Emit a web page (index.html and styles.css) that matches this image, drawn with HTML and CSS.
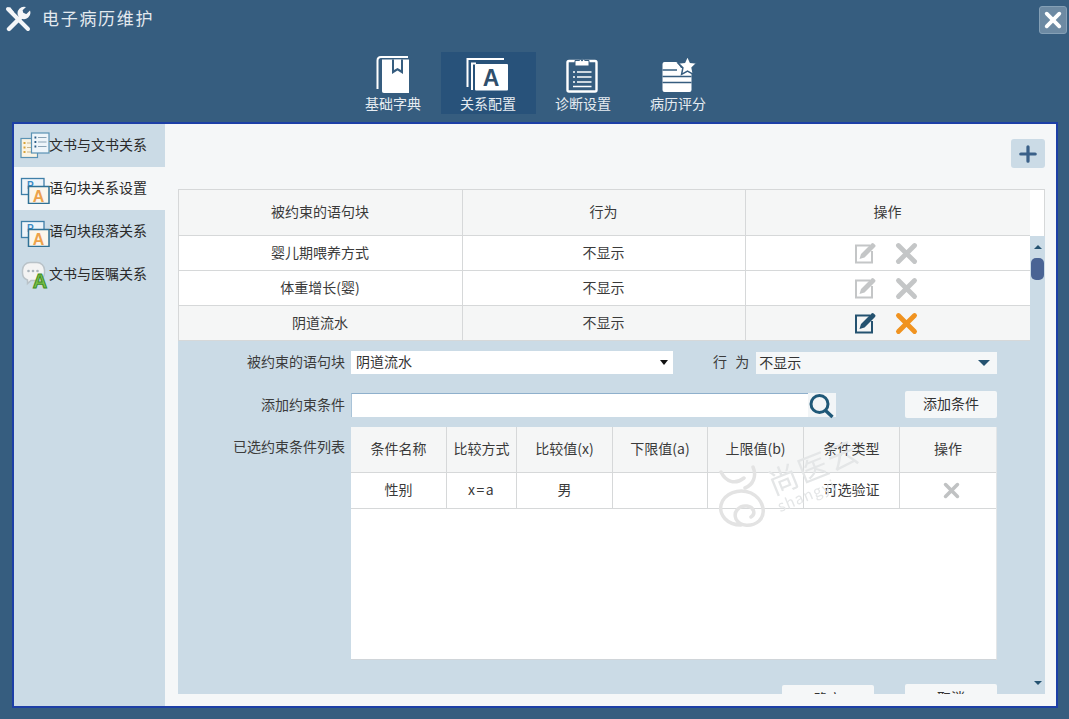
FILE: index.html
```html
<!DOCTYPE html>
<html lang="zh">
<head>
<meta charset="utf-8">
<title>电子病历维护</title>
<link rel="stylesheet" href="styles.css">
</head>
<body>
<svg class="defs" width="0" height="0" aria-hidden="true">
  <symbol id="i-edit" viewBox="0 0 23 22">
    <path d="M16 3.500H2v17h16V9" fill="none" stroke="currentColor" stroke-width="2"/>
    <path d="M5.500 17l1.500-5L17.500 1.500a1.500 1.500 0 0 1 2.200 0l1.300 1.300a1.500 1.500 0 0 1 0 2.200L10.500 15.500z" fill="currentColor"/>
  </symbol>
  <symbol id="i-x" viewBox="0 0 20 20">
    <path d="M3 3l14 14M17 3L3 17" fill="none" stroke="currentColor" stroke-width="4.200" stroke-linecap="round"/>
  </symbol>
</svg>

<header class="top">
  <div class="titlebar">
    <svg class="tool-icon" viewBox="0 0 26 26">
      <path d="M3 3l20 20" stroke="#f4f6f8" stroke-width="4" stroke-linecap="round"/>
      <path d="M2 3.500l3-2.500 4 5-2.500 2.500z" fill="#f4f6f8"/>
      <path d="M4 23L18 9" stroke="#f4f6f8" stroke-width="4.400" stroke-linecap="round"/>
      <path d="M25 4.500l-3.600 3.500-3-.800-.800-3L21 1a6.500 6.500 0 0 0-8 8.500l3 3a6.500 6.500 0 0 0 9-8z" fill="#f4f6f8"/>
    </svg>
    <h1 class="title">电子病历维护</h1>
    <button class="close" aria-label="关闭">
      <svg viewBox="0 0 20 20" class="close-x"><use href="#i-x"/></svg>
    </button>
  </div>
  <nav class="tabs">
    <a class="tab">
      <svg class="tab-icon" viewBox="0 0 38 38">
        <path d="M3.500 33V4.500C3.500 2 5 1 7 1h27" fill="none" stroke="#fff" stroke-width="2"/>
        <path d="M8 3.500h27V37H10c-1.500 0-2-1-2-2z" fill="#fff"/>
        <path d="M18 3.500h11v14.500l-5.500-3.500-5.500 3.500z" fill="#365d7f"/>
        <path d="M20 3.500h7v10.500l-3.500-2-3.500 2z" fill="#fff"/>
      </svg>
      <span>基础字典</span>
    </a>
    <a class="tab tab-on">
      <svg class="tab-icon" viewBox="0 0 44 38">
        <path d="M1.500 31V3H38" fill="none" stroke="#fff" stroke-width="2"/>
        <path d="M6 34V7.500h4" fill="none" stroke="#fff" stroke-width="2"/>
        <rect x="9" y="8" width="33" height="26.500" rx="1" fill="#fff"/>
        <text x="25" y="29.500" class="ico-tab-a">A</text>
      </svg>
      <span>关系配置</span>
    </a>
    <a class="tab">
      <svg class="tab-icon" viewBox="0 0 38 38">
        <rect x="3.500" y="5" width="29" height="30.500" rx="1.500" fill="none" stroke="#fff" stroke-width="2.400"/>
        <path d="M11 10V4.500h4.500a2.800 2.800 0 0 1 5.200 0H25V10z" fill="#fff" stroke="#365d7f" stroke-width="1"/>
        <circle cx="18" cy="4.200" r="1.100" fill="#365d7f"/>
        <path d="M9 16h2M13 16h14.500M9 21h2M13 21h14.500M9 26h2M13 26h14.500M9 30.500h18.500" stroke="#fff" stroke-width="1.300"/>
      </svg>
      <span>诊断设置</span>
    </a>
    <a class="tab">
      <svg class="tab-icon" viewBox="0 0 38 38">
        <path d="M5.500 6H18l4 6h10.500v22a2 2 0 0 1-2 2h-25a2 2 0 0 1-2-2V8a2 2 0 0 1 2-2z" fill="#fff"/>
        <path d="M3.500 14H18M3.500 20.500h29M3.500 26.500h29" stroke="#365d7f" stroke-width="1.500"/>
        <path d="M28.500 0l2.900 6.300 6.600.800-4.900 4.600 1.300 6.700-5.900-3.400-5.900 3.400 1.300-6.700-4.900-4.600 6.600-.800z" fill="#fff" stroke="#365d7f" stroke-width="1.500"/>
      </svg>
      <span>病历评分</span>
    </a>
  </nav>
</header>

<section class="panel">
  <aside class="side">
    <a class="side-item">
      <svg class="side-icon" viewBox="0 0 30 30">
        <rect x="1" y="7.500" width="16.500" height="19" fill="#fbf4e4" stroke="#5a92b4" stroke-width="1.200"/>
        <path d="M3.500 12h2M3.500 16.500h2M3.500 21h2" stroke="#d9a33a" stroke-width="1.800"/>
        <path d="M7 12h8M7 16.500h8M7 21h8" stroke="#c9b68e" stroke-width="1"/>
        <rect x="11.500" y="2" width="17.500" height="20" fill="#eef5fa" stroke="#5a92b4" stroke-width="1.200"/>
        <path d="M14.500 6.500h1.800M14.500 11h1.800M14.500 15.500h1.800" stroke="#2b5d86" stroke-width="1.800"/>
        <path d="M18 6.500h8.500M18 11h8.500M18 15.500h8.500" stroke="#8aa3b6" stroke-width="1"/>
      </svg>
      <span class="side-text">文书与文书关系</span>
    </a>
    <a class="side-item side-on">
      <svg class="side-icon" viewBox="0 0 30 30">
        <rect x="1.500" y="4.500" width="22.500" height="16" fill="#eef4f9" stroke="#3f7fa8" stroke-width="1.300"/>
        <text x="7" y="14.500" class="ico-p">P</text>
        <rect x="8.500" y="12.500" width="20.500" height="17" fill="#fbf6ec" stroke="#2f7196" stroke-width="1.500"/>
        <text x="18.500" y="27.500" class="ico-a">A</text>
      </svg>
      <span class="side-text">语句块关系设置</span>
    </a>
    <a class="side-item">
      <svg class="side-icon" viewBox="0 0 30 30">
        <rect x="1.500" y="4.500" width="22.500" height="16" fill="#eef4f9" stroke="#3f7fa8" stroke-width="1.300"/>
        <text x="7" y="14.500" class="ico-p">P</text>
        <rect x="8.500" y="12.500" width="20.500" height="17" fill="#fbf6ec" stroke="#2f7196" stroke-width="1.500"/>
        <text x="18.500" y="27.500" class="ico-a">A</text>
      </svg>
      <span class="side-text">语句块段落关系</span>
    </a>
    <a class="side-item">
      <svg class="side-icon" viewBox="0 0 30 30">
        <path d="M10 2.500h7a7.500 7.500 0 0 1 7.500 7.500v3a7.500 7.500 0 0 1-7.500 7.500h-6l-3.500 3v-3.500A7.500 7.500 0 0 1 2.500 13v-3A7.500 7.500 0 0 1 10 2.500z" fill="#f3f3f3" stroke="#b9c2c8" stroke-width="1.500"/>
        <circle cx="8.500" cy="11" r="1.300" fill="#aab4bb"/>
        <circle cx="13" cy="11" r="1.300" fill="#aab4bb"/>
        <circle cx="17.500" cy="11" r="1.300" fill="#aab4bb"/>
        <text x="20" y="28" class="ico-green">A</text>
      </svg>
      <span class="side-text">文书与医嘱关系</span>
    </a>
  </aside>

  <main class="main">
    <div class="toolbar">
      <button class="add" aria-label="新增">
        <svg viewBox="0 0 20 20" class="add-plus"><path d="M10 2v16M2 10h16" stroke="#3a6088" stroke-width="3.600" stroke-linecap="round"/></svg>
      </button>
    </div>

    <div class="view">
      <div class="view-body">
        <table class="grid grid-main">
          <colgroup><col class="c-a"><col class="c-b"><col class="c-c"></colgroup>
          <thead>
            <tr><th>被约束的语句块</th><th>行为</th><th>操作</th></tr>
          </thead>
          <tbody>
            <tr>
              <td>婴儿期喂养方式</td><td>不显示</td>
              <td class="cell-ops"><span class="ops"><svg class="op op-e off"><use href="#i-edit"/></svg><svg class="op op-x off"><use href="#i-x"/></svg></span></td>
            </tr>
            <tr>
              <td>体重增长(婴)</td><td>不显示</td>
              <td class="cell-ops"><span class="ops"><svg class="op op-e off"><use href="#i-edit"/></svg><svg class="op op-x off"><use href="#i-x"/></svg></span></td>
            </tr>
            <tr class="row-on">
              <td>阴道流水</td><td>不显示</td>
              <td class="cell-ops"><span class="ops"><svg class="op op-e e-on"><use href="#i-edit"/></svg><svg class="op op-x x-on"><use href="#i-x"/></svg></span></td>
            </tr>
          </tbody>
        </table>

        <form class="form">
          <div class="form-row">
            <label class="lbl">被约束的语句块</label>
            <div class="sel sel-a"><span class="sel-text">阴道流水</span><i class="tri tri-k"></i></div>
            <label class="lbl2">行 为</label>
            <div class="sel sel-b"><span class="sel-text">不显示</span><i class="tri tri-b"></i></div>
          </div>
          <div class="form-row row-2">
            <label class="lbl">添加约束条件</label>
            <div class="inp"></div>
            <button type="button" class="search" aria-label="搜索">
              <svg viewBox="0 0 28 26" class="search-ico">
                <circle cx="11.500" cy="11" r="8.500" fill="none" stroke="#1f5878" stroke-width="3"/>
                <path d="M17.500 17.500l7 6.500" stroke="#1f5878" stroke-width="3.400"/>
              </svg>
            </button>
            <button type="button" class="btn btn-add">添加条件</button>
          </div>
          <div class="form-row row-3">
            <label class="lbl lbl-top">已选约束条件列表</label>
            <div class="sub">
              <table class="grid grid-sub">
                <colgroup><col class="s1"><col class="s2"><col class="s3"><col class="s4"><col class="s5"><col class="s6"><col class="s7"></colgroup>
                <thead>
                  <tr><th>条件名称</th><th>比较方式</th><th>比较值(x)</th><th>下限值(a)</th><th>上限值(b)</th><th>条件类型</th><th>操作</th></tr>
                </thead>
                <tbody>
                  <tr><td>性别</td><td class="cmp">x=a</td><td>男</td><td></td><td></td><td>可选验证</td><td><svg class="op-mini"><use href="#i-x"/></svg></td></tr>
                </tbody>
              </table>
              <svg viewBox="0 0 53 63" class="mark-logo">
                <path d="M4 7c5 10 14 13 23 6M36 2c4 9 0 18-8 21" fill="none" stroke="#e3e3e3" stroke-width="3.500" stroke-linecap="round"/>
                <path d="M24 60C10 60 2 50 4 40c3-12 18-17 30-12 12 6 16 20 8 28-7 6-19 6-23-2-3-7 3-14 11-13 7 1 9 8 4 11" fill="none" stroke="#e3e3e3" stroke-width="3.500" stroke-linecap="round"/>
              </svg>
              <div class="mark-text">
                <span class="mark-cn">尚医云</span>
                <span class="mark-en">shangyi</span>
              </div>
            </div>
          </div>
          <div class="actions">
            <button type="button" class="btn btn-act">确定</button>
            <button type="button" class="btn btn-act btn-up">取消</button>
          </div>
        </form>
      </div>

      <div class="bar">
        <div class="bar-head"></div>
        <div class="bar-track">
          <i class="bar-up"></i>
          <i class="bar-thumb"></i>
          <i class="bar-down"></i>
        </div>
      </div>
    </div>
  </main>
</section>
</body>
</html>
```

FILE: styles.css
```css
* { box-sizing: border-box; }
html, body { margin: 0; height: 100%; }
body {
  width: 1069px;
  height: 719px;
  overflow: hidden;
  background: #365d7f;
  color: #333;
  font-family: "Noto Sans CJK SC", "Liberation Sans", sans-serif;
  font-size: 14px;
}
.defs { position: absolute; }
.ico-p { font: bold 10px "Liberation Sans", sans-serif; fill: #3b8ac4; }
.ico-a { font: bold 16px "Liberation Sans", sans-serif; fill: #eda24a; text-anchor: middle; }
.ico-tab-a { font: bold 23px "Liberation Sans", sans-serif; fill: #2f4f6c; text-anchor: middle; }
.ico-green { font: bold 20px "Liberation Sans", sans-serif; fill: #7cc24a; stroke: #3d8c24; stroke-width: 1; text-anchor: middle; }

.top { height: 122px; }
.titlebar {
  height: 40px;
  display: flex;
  align-items: center;
  padding: 0 2px 0 5px;
}
.tool-icon { width: 26px; height: 26px; margin-top: -3px; flex: none; }
.title {
  margin: -6px 0 0 11px;
  font-size: 17px;
  font-weight: 400;
  letter-spacing: 1.700px;
  color: #e4eaef;
  flex: 1;
}
.close {
  width: 28px;
  height: 28px;
  padding: 4px;
  background: #6d8aa3;
  border: 1px solid #85a0b6;
  border-radius: 3px;
}
.close-x { display: block; width: 18px; height: 18px; color: #fff; }

.tabs {
  display: flex;
  justify-content: center;
  margin-top: 12px;
  padding-left: 2px;
}
.tab {
  width: 95px;
  height: 62px;
  padding-top: 4px;
  display: flex;
  flex-direction: column;
  align-items: center;
  color: #e6ecf1;
  line-height: 18px;
}
.tab-on { background: #28527a; }
.tab-icon { width: 44px; height: 38px; flex: none; }

.panel {
  width: 1046px;
  height: 586px;
  margin-left: 12px;
  display: flex;
  background: #f5f7f8;
  border: 2px solid #1d3fa6;
}
.side {
  width: 151px;
  flex: none;
  background: #cbdbe6;
}
.side-item {
  height: 43px;
  display: flex;
  align-items: center;
  padding-left: 6px;
  color: #2a2a2a;
}
.side-on { background: #f5f7f8; }
.side-icon { width: 30px; height: 30px; margin-right: -1px; flex: none; }
.side-text { padding-bottom: 3px; }

.main {
  flex: 1;
  min-width: 0;
  display: flex;
  flex-direction: column;
  padding: 15px 11px 12px 13px;
}
.toolbar {
  display: flex;
  justify-content: flex-end;
  margin-bottom: 21px;
}
.add {
  width: 34px;
  height: 29px;
  padding: 5px 8px;
  background: #cbdbe6;
  border: 0;
  border-radius: 3px;
}
.add-plus { display: block; width: 18px; height: 18px; }

.view {
  flex: 1;
  min-height: 0;
  display: flex;
}
.view-body {
  width: 852px;
  flex: none;
  display: flex;
  flex-direction: column;
  overflow: hidden;
}
.grid {
  table-layout: fixed;
  border-collapse: separate;
  border-spacing: 0;
  flex: none;
}
.grid th, .grid td {
  padding: 0 0 2px;
  text-align: center;
  vertical-align: middle;
  font-weight: 400;
  border-right: 1px solid #d6d8d9;
  border-bottom: 1px solid #d6d8d9;
}
.grid th { background: #f5f6f6; color: #3a3a3a; padding-bottom: 4px; }
.grid td { background: #fff; color: #3a3a3a; }
.grid-main { width: 852px; border-top: 1px solid #d6d8d9; border-left: 1px solid #d6d8d9; }
.grid-main th { height: 46px; padding-right: 1px; }
.grid-main td { height: 35px; padding-right: 1px; }
.grid-main .row-on td { background: #f5f6f6; }
.grid-main .cell-ops { padding: 0; }
.c-a { width: 284px; }
.c-b { width: 283px; }
.c-c { width: 285px; }
.ops { display: inline-flex; align-items: center; gap: 18px; vertical-align: middle; margin-right: 5px; }
.op { display: block; }
.op-e { width: 23px; height: 22px; }
.op-x { width: 23px; height: 23px; }
.off { color: #c4c6c7; }
.e-on { color: #245270; }
.x-on { color: #f09320; }

.form {
  flex: 1;
  background: #cbdbe6;
  padding-top: 10px;
  min-height: 0;
}
.form-row { display: flex; align-items: center; }
.lbl {
  width: 167px;
  margin-right: 6px;
  padding-bottom: 3px;
  flex: none;
  text-align: right;
  color: #3c3c3c;
  line-height: 20px;
}
.lbl-top { align-self: flex-start; padding: 9px 0 0; line-height: 20px; }
.lbl2 { margin: 0 7px 0 40px; padding-bottom: 3px; word-spacing: 5px; color: #3c3c3c; }
.sel {
  height: 23px;
  display: flex;
  align-items: center;
  justify-content: space-between;
  color: #333;
}
.sel-text { padding-bottom: 3px; }
.sel-a { width: 322px; background: #fff; padding: 0 5px; }
.sel-b { width: 241px; height: 22px; margin-top: 1px; background: #f5f7f8; padding: 0 7px 0 3px; }
.tri { display: block; width: 0; height: 0; border-style: solid; border-color: transparent; border-bottom-width: 0; }
.tri-k { border-width: 5px 4px 0; border-top-color: #111; }
.tri-b { border-width: 6px 6px 0; border-top-color: #245270; }

.row-2 { margin-top: 19px; height: 24px; }
.inp {
  width: 457px;
  height: 24px;
  background: #fff;
  border-top: 1px solid #8fb0cc;
  border-left: 1px solid #a9c3d8;
}
.search {
  width: 28px;
  height: 24px;
  padding: 0;
  background: #f2f5f7;
  border: 0;
}
.search-ico { display: block; width: 28px; height: 26px; }
.btn {
  padding: 0 0 3px;
  width: 92px;
  height: 27px;
  background: #f5f7f8;
  border: 0;
  border-radius: 2px;
  color: #333;
  font: inherit;
}
.btn-add { margin-left: 69px; margin-top: -1px; }

.row-3 { margin-top: 10px; align-items: flex-start; }
.sub {
  position: relative;
  width: 646px;
  height: 233px;
  background: #fff;
  border-bottom: 1px solid #d0d5d9;
  border-right: 1px solid #e3e6e8;
  overflow: hidden;
}
.grid-sub { width: 646px; }
.grid-sub th { height: 46px; }
.grid-sub td { height: 36px; padding-bottom: 4px; }
.grid-sub .cmp { letter-spacing: 1.500px; }
.s1 { width: 96px; }
.s2 { width: 70px; }
.s3 { width: 96px; }
.s4 { width: 95px; }
.s5 { width: 96px; }
.s6 { width: 96px; }
.s7 { width: 97px; }
.op-mini { display: block; width: 17px; height: 17px; margin: 3px 0 0 43px; color: #c0c2c3; }

.mark-logo {
  position: absolute;
  left: 366px;
  top: 38px;
  width: 53px;
  height: 63px;
  pointer-events: none;
}
.mark-text {
  position: absolute;
  left: 430px;
  top: 38px;
  display: flex;
  flex-direction: column;
  transform: rotate(-22deg);
  transform-origin: left bottom;
  pointer-events: none;
}
.mark-cn { font-size: 30px; line-height: 32px; color: #e4e6e7; letter-spacing: 2px; white-space: nowrap; mix-blend-mode: multiply; }
.mark-en { font-size: 15px; line-height: 17px; color: #e4e6e7; letter-spacing: 1px; white-space: nowrap; }

.actions { display: flex; margin: 25px 0 0 604px; align-items: flex-start; gap: 31px; }
.btn-act { height: 28px; }
.btn-up { margin-top: -1px; }

.bar { width: 15px; flex: none; display: flex; flex-direction: column; }
.bar-head {
  height: 47px;
  background: #fff;
  border-top: 1px solid #d6d8d9;
  border-right: 1px solid #d6d8d9;
}
.bar-track {
  flex: 1;
  background: #cbdbe6;
  display: flex;
  flex-direction: column;
  align-items: center;
  padding: 9px 0 9px;
}
.bar-up { width: 0; height: 0; border-style: solid; border-width: 0 4px 4px; border-color: transparent transparent #245270; }
.bar-thumb { width: 13px; height: 22px; margin-top: 9px; background: #4a6494; border-radius: 5px; }
.bar-down { width: 0; height: 0; margin-top: auto; border-style: solid; border-width: 4px 4px 0; border-color: #245270 transparent transparent; }
```
